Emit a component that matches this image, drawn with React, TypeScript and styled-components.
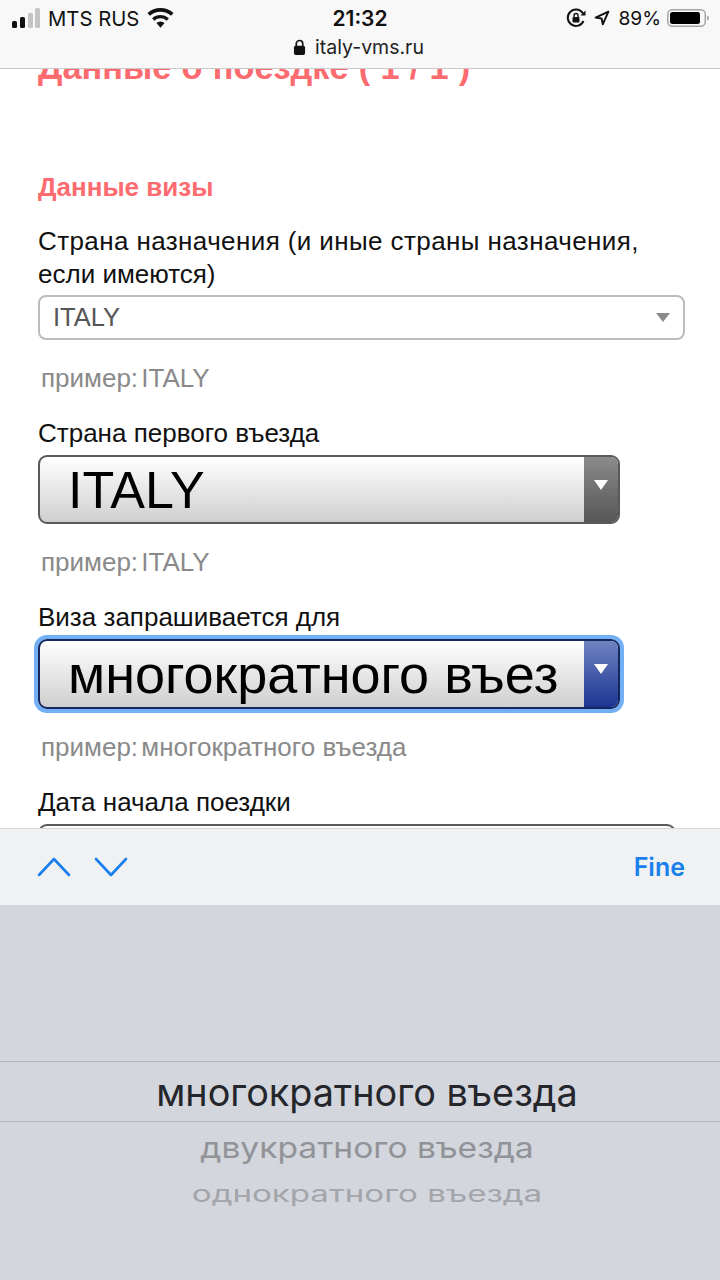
import React from "react";
import styled, { createGlobalStyle } from "styled-components";

const Global = createGlobalStyle`
  html, body {
    margin: 0;
    padding: 0;
    background: #fff;
  }
`;

const Screen = styled.div`
  width: 720px;
  height: 1280px;
  display: flex;
  flex-direction: column;
  overflow: hidden;
  font-family: "Liberation Sans", Arial, sans-serif;
`;

const TopBar = styled.header`
  position: relative;
  z-index: 2;
  flex: none;
  height: 68px;
  background: #f8f8f8;
  border-bottom: 1px solid #c9c9c9;
  font-family: Inter, "Liberation Sans", sans-serif;
  color: #111;
`;

const StatusRow = styled.div`
  height: 36px;
  padding: 0 10px 0 10px;
  display: grid;
  grid-template-columns: 1fr auto 1fr;
  align-items: center;
  font-size: 20.3px;
`;

const StatusLeft = styled.div`
  display: flex;
  align-items: center;
  gap: 8px;
`;

const StatusRight = styled.div`
  display: flex;
  align-items: center;
  justify-content: flex-end;
  gap: 6px;
  font-size: 19.2px;
`;

const Clock = styled.div`
  font-weight: 600;
  font-size: 21px;
`;

const Address = styled.div`
  display: flex;
  align-items: center;
  justify-content: center;
  gap: 9px;
  padding-right: 3px;
  font-size: 19.5px;
  line-height: 22px;
  color: #222;
`;

const Content = styled.main`
  flex: 1;
  min-height: 0;
  overflow: hidden;
  padding: 0 38px;
  margin-top: -22px;
`;

const Title = styled.h1`
  margin: 0;
  font-size: 34.3px;
  line-height: 40px;
  font-weight: 700;
  word-spacing: 0.7px;
  color: #fb6b6f;
`;

const SectionTitle = styled.h2`
  margin: 86px 0 24px;
  font-size: 26px;
  line-height: 28px;
  font-weight: 700;
  color: #fb6b6f;
`;

const Label = styled.div`
  margin-bottom: 5px;
  font-size: 26px;
  line-height: 33px;
  color: #111;
`;

const WideLine = styled.span`
  letter-spacing: 0.4px;
`;

const Hint = styled.div`
  margin: 21px 0 22px 3px;
  font-size: 26px;
  line-height: 34px;
  color: #8a8a8a;
`;

const HintPrefix = styled.span`
  word-spacing: -4px;
`;

const PlainSelect = styled.div`
  box-sizing: border-box;
  width: 647px;
  height: 45px;
  margin-top: -1px;
  padding: 0 13px;
  display: flex;
  align-items: center;
  justify-content: space-between;
  border: 2px solid #bcbcbc;
  border-radius: 8px;
  font-size: 25.5px;
  color: #555;
`;

const Caret = styled.span`
  width: 0;
  height: 0;
  border-left: 7px solid transparent;
  border-right: 7px solid transparent;
  border-top: 9px solid #8a8a8a;
`;

const BigSelect = styled.div<{ $focused?: boolean }>`
  box-sizing: border-box;
  width: 582px;
  height: ${(p) => (p.$focused ? 70 : 69)}px;
  display: flex;
  overflow: hidden;
  border: 2px solid ${(p) => (p.$focused ? "#14285f" : "#5a5a5a")};
  border-radius: 9px;
  background: linear-gradient(#fff, #cfcfcf);
  box-shadow: ${(p) => (p.$focused ? "0 0 0 4px #73aff5" : "none")};
`;

const BigValue = styled.div<{ $size: number }>`
  flex: 1;
  min-width: 0;
  padding-left: 28px;
  overflow: hidden;
  white-space: nowrap;
  font-size: ${(p) => p.$size}px;
  line-height: 66px;
  color: #000;
`;

const Arrow = styled.div<{ $focused?: boolean }>`
  flex: none;
  width: 34px;
  padding-top: 23px;
  box-sizing: border-box;
  display: flex;
  justify-content: center;
  background: ${(p) =>
    p.$focused
      ? "linear-gradient(#6f83c0, #1c3593)"
      : "linear-gradient(#8b8b8b, #565656)"};
`;

const ArrowGlyph = styled.span`
  width: 0;
  height: 0;
  border-left: 7px solid transparent;
  border-right: 7px solid transparent;
  border-top: 10px solid #fff;
`;

const PeekSelect = styled.div`
  box-sizing: border-box;
  width: 638px;
  height: 69px;
  border: 2px solid #5a5a5a;
  border-radius: 9px;
  background: linear-gradient(#fff, #cfcfcf);
`;

const Accessory = styled.div`
  position: relative;
  z-index: 2;
  flex: none;
  height: 76px;
  padding: 0 35px 0 37px;
  display: flex;
  align-items: center;
  justify-content: space-between;
  background: #f0f1f3;
  border-top: 1px solid #d6d7da;
`;

const NavArrows = styled.div`
  display: flex;
  gap: 23px;
`;

const Done = styled.div`
  font-family: Inter, "Liberation Sans", sans-serif;
  font-size: 25px;
  font-weight: 600;
  color: #197fee;
`;

const Picker = styled.div`
  position: relative;
  z-index: 2;
  flex: none;
  height: 375px;
  box-sizing: border-box;
  padding-top: 156px;
  background: #d3d6dc;
  font-family: Inter, "Liberation Sans", sans-serif;
  text-align: center;
`;

const Selected = styled.div`
  height: 59px;
  padding-left: 14px;
  line-height: 60px;
  font-size: 37.8px;
  color: #24262b;
  border-top: 1px solid #b3b5ba;
  border-bottom: 1px solid #b3b5ba;
`;

const Option = styled.div<{ $far?: boolean }>`
  height: ${(p) => (p.$far ? 44 : 50)}px;
  padding-left: 14px;
  line-height: ${(p) => (p.$far ? 44 : 50)}px;
  font-size: ${(p) => (p.$far ? 33.1 : 33.6)}px;
  color: ${(p) => (p.$far ? "#a3a5aa" : "#919398")};
  transform: scaleY(${(p) => (p.$far ? 0.68 : 0.88)});
`;

const Signal = () => (
  <svg width="30" height="22" viewBox="-2 0 30 22">
    <rect x="0" y="14" width="5" height="7" rx="1.5" fill="#111" />
    <rect x="8" y="10" width="5" height="11" rx="1.5" fill="#111" />
    <rect x="16" y="6" width="5" height="15" rx="1.5" fill="#c4c4c4" />
    <rect x="23" y="1" width="5" height="20" rx="1.5" fill="#c4c4c4" />
  </svg>
);

const Wifi = () => (
  <svg width="27" height="20" viewBox="0 0 28 20">
    <path d="M14 20l-4.2-4.8a6.2 6.2 0 0 1 8.4 0z" fill="#111" />
    <path d="M7.6 12.8a9.6 9.6 0 0 1 12.8 0l2.3-2.6a13.2 13.2 0 0 0-17.4 0z" fill="#111" />
    <path d="M3.1 7.7a16.4 16.4 0 0 1 21.8 0l2.6-2.9a20.4 20.4 0 0 0-27 0z" fill="#111" />
  </svg>
);

const RotationLock = () => (
  <svg width="20" height="20" viewBox="0 0 20 20" fill="none">
    <path d="M17.5 13A8.2 8.2 0 1 1 17 5.5" stroke="#111" strokeWidth="2" />
    <path d="M19.5 2.5v5h-5z" fill="#111" />
    <rect x="6.5" y="9" width="7" height="5.5" rx="1" fill="#111" />
    <path d="M8 9V7.5a2 2 0 0 1 4 0V9" stroke="#111" strokeWidth="1.4" />
  </svg>
);

const Location = () => (
  <svg width="20" height="16" viewBox="-2.5 0 25 20" fill="none">
    <path d="M18 2L2 9.5l7.5 1.2L11 18z" stroke="#111" strokeWidth="2.4" strokeLinejoin="round" />
  </svg>
);

const Battery = () => (
  <svg width="43" height="20" viewBox="0 0 43 20">
    <rect x="0.75" y="1.75" width="37.5" height="16.5" rx="4.5" fill="none" stroke="#a5a5a5" strokeWidth="1.5" />
    <rect x="3" y="4" width="30" height="12" rx="2.5" fill="#000" />
    <path d="M40 7.5c1.5.4 2 1.3 2 2.5s-.5 2.1-2 2.5z" fill="#a5a5a5" />
  </svg>
);

const Lock = () => (
  <svg width="13" height="17" viewBox="0 0 14 18" fill="none">
    <rect x="1" y="7" width="12" height="10" rx="2" fill="#111" />
    <path d="M3.5 8V5a3.5 3.5 0 0 1 7 0v3" stroke="#111" strokeWidth="1.8" />
  </svg>
);

const Chevron = ({ down }: { down?: boolean }) => (
  <svg width="34" height="22" viewBox="0 0 34 22" fill="none">
    <path
      d={down ? "M2 3l15 16L32 3" : "M2 19L17 3l15 16"}
      stroke="#197fee"
      strokeWidth="2.6"
      strokeLinecap="round"
      strokeLinejoin="round"
    />
  </svg>
);

const App = () => {
  return (
    <Screen>
      <Global />
      <TopBar>
        <StatusRow>
          <StatusLeft>
            <Signal />
            <span>MTS RUS</span>
            <Wifi />
          </StatusLeft>
          <Clock>21:32</Clock>
          <StatusRight>
            <RotationLock />
            <Location />
            <span>89%</span>
            <Battery />
          </StatusRight>
        </StatusRow>
        <Address>
          <Lock />
          <span>italy-vms.ru</span>
        </Address>
      </TopBar>

      <Content>
        <Title>Данные о поездке ( 1 / 1 )</Title>
        <SectionTitle>Данные визы</SectionTitle>

        <Label>
          <WideLine>Страна назначения (и иные страны назначения,</WideLine>
          <br />
          если имеются)
        </Label>
        <PlainSelect>
          ITALY
          <Caret />
        </PlainSelect>
        <Hint>
          <HintPrefix>пример: </HintPrefix>ITALY
        </Hint>

        <Label>Страна первого въезда</Label>
        <BigSelect>
          <BigValue $size={52}>ITALY</BigValue>
          <Arrow>
            <ArrowGlyph />
          </Arrow>
        </BigSelect>
        <Hint>
          <HintPrefix>пример: </HintPrefix>ITALY
        </Hint>

        <Label>Виза запрашивается для</Label>
        <BigSelect $focused>
          <BigValue $size={54}>многократного въез</BigValue>
          <Arrow $focused>
            <ArrowGlyph />
          </Arrow>
        </BigSelect>
        <Hint>
          <HintPrefix>пример: </HintPrefix>многократного въезда
        </Hint>

        <Label>Дата начала поездки</Label>
        <PeekSelect />
      </Content>

      <Accessory>
        <NavArrows>
          <Chevron />
          <Chevron down />
        </NavArrows>
        <Done>Fine</Done>
      </Accessory>

      <Picker>
        <Selected>многократного въезда</Selected>
        <Option>двукратного въезда</Option>
        <Option $far>однократного въезда</Option>
      </Picker>
    </Screen>
  );
};

export default App;
